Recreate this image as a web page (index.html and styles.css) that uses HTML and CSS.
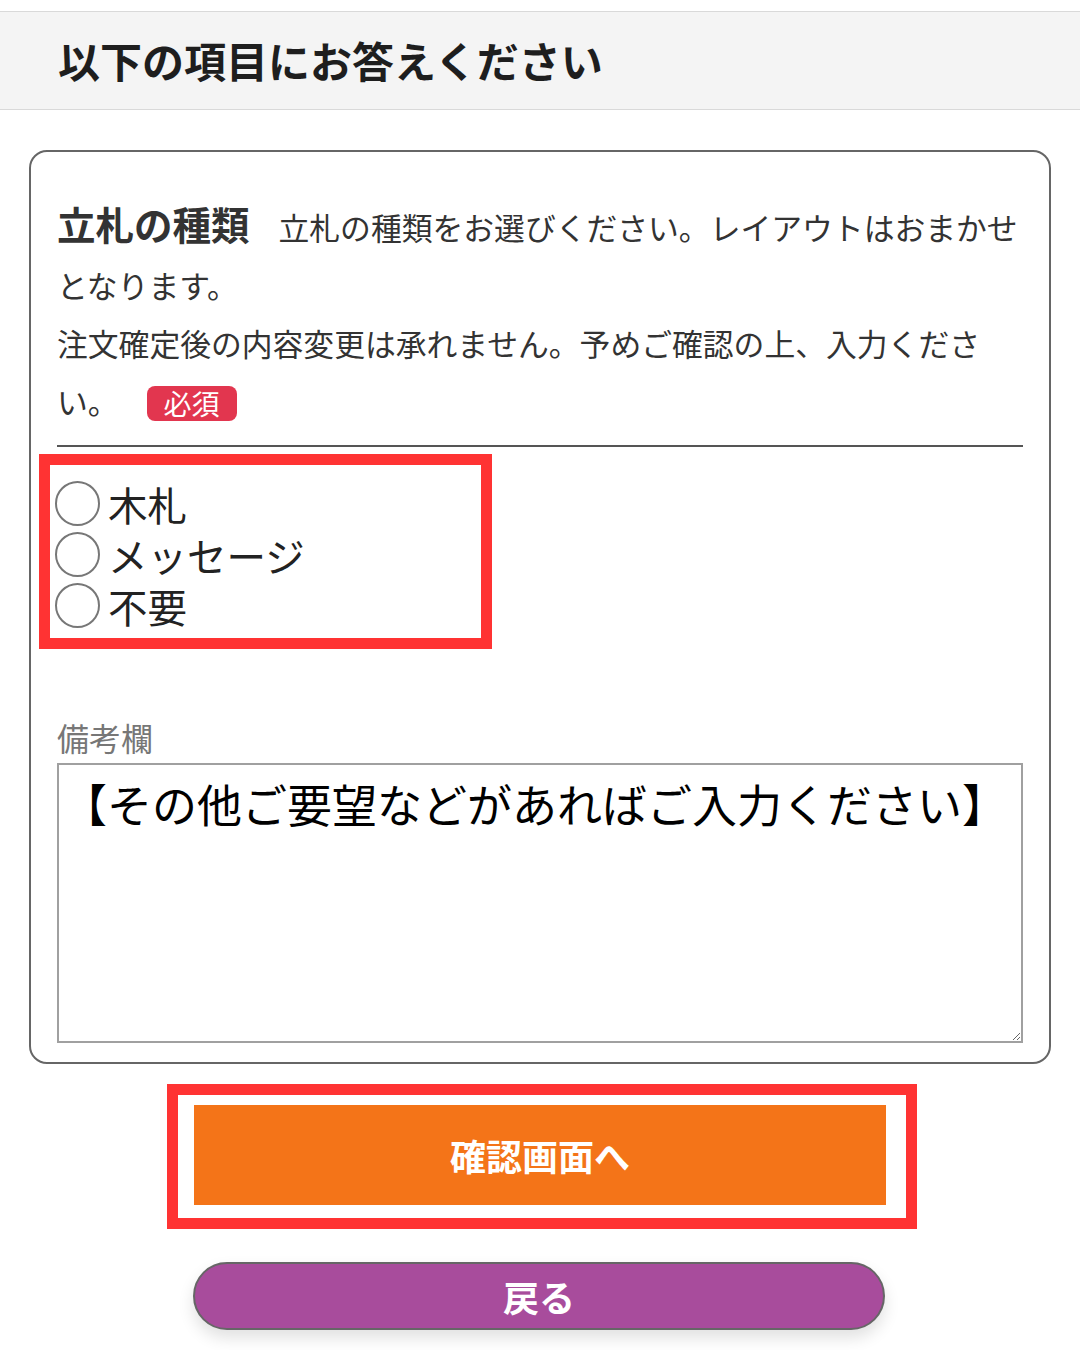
FILE: index.html
```html
<!DOCTYPE html>
<html lang="ja">
<head>
<meta charset="utf-8">
<title>以下の項目にお答えください</title>
<link rel="stylesheet" href="styles.css">
</head>
<body>
<header class="hd">
  <h1 class="hd-title">以下の項目にお答えください</h1>
</header>
<form class="form" onsubmit="return false">
  <section class="card">
    <p class="q"><span class="q-title">立札の種類</span><span class="q-desc">立札の種類をお選びください。レイアウトはおまかせとなります。<br>注文確定後の内容変更は承れません。予めご確認の上、入力ください。</span><span class="badge">必須</span></p>
    <hr class="rule">
    <div class="hl-box choices">
      <label class="choice"><input type="radio" name="kind" class="radio"><span class="choice-text">木札</span></label>
      <label class="choice"><input type="radio" name="kind" class="radio"><span class="choice-text">メッセージ</span></label>
      <label class="choice"><input type="radio" name="kind" class="radio"><span class="choice-text">不要</span></label>
    </div>
    <label class="note-label" for="note">備考欄</label>
    <textarea class="note" id="note">【その他ご要望などがあればご入力ください】</textarea>
  </section>
  <div class="hl-box next-wrap">
    <button type="button" class="btn-next">確認画面へ</button>
  </div>
  <button type="button" class="btn-back">戻る</button>
</form>
</body>
</html>
```
FILE: styles.css
```css
html, body {
  margin: 0;
  padding: 0;
  background: #fff;
}
body {
  font-family: "Noto Sans CJK JP", "Noto Sans", sans-serif;
  color: #333;
}
.hd {
  margin-top: 11px;
  border-top: 1px solid #d9d9d9;
  border-bottom: 1px solid #d9d9d9;
  background: #f4f4f4;
  height: 97px;
  display: flex;
  align-items: center;
  padding-left: 58px;
}
.hd-title {
  margin: 0;
  font-size: 42px;
  font-weight: 700;
  color: #1e1e1e;
  line-height: 1;
  position: relative;
  top: -1px;
}
.form {
  margin: 0;
  padding-bottom: 20px;
}
.card {
  margin: 40px 29px 0;
  border: 2px solid #666;
  border-radius: 18px;
  padding: 42px 26px 19px;
}
.q {
  margin: 0;
  font-size: 30.8px;
  line-height: 58px;
  color: #333;
}
.q-title {
  font-size: 38.5px;
  font-weight: 700;
  margin-right: 29px;
}
.badge {
  display: inline-block;
  margin-left: 28px;
  padding: 0 17px;
  height: 35px;
  line-height: 35px;
  font-size: 28px;
  color: #fff;
  background: #e2364f;
  border-radius: 8px;
  vertical-align: middle;
  position: relative;
  top: -2px;
}
.rule {
  border: 0;
  border-top: 2px solid #555;
  margin: 15px 0 0;
}
.hl-box {
  box-sizing: border-box;
  border: 11px solid #ff3333;
}
.choices {
  margin: 7px 0 0 -18px;
  width: 453px;
  padding: 13px 5px 7px;
}
.choice {
  display: flex;
  align-items: center;
  height: 51px;
  cursor: pointer;
}
.radio {
  appearance: none;
  -webkit-appearance: none;
  box-sizing: border-box;
  width: 45px;
  height: 45px;
  margin: 0;
  border: 2.5px solid #777;
  border-radius: 50%;
  background: #fff;
  flex: none;
}
.radio:checked {
  background: radial-gradient(circle, #333 0 9px, #fff 10px);
}
.choice-text {
  margin-left: 8px;
  font-size: 39.5px;
  line-height: 51px;
  color: #222;
}
.note-label {
  display: block;
  margin-top: 68px;
  font-size: 32px;
  line-height: 40px;
  color: #777;
}
.note {
  display: block;
  box-sizing: border-box;
  width: 100%;
  height: 280px;
  margin: 6px 0 0;
  border: 2px solid #a0a0a0;
  border-radius: 0;
  padding: 12px 3px;
  font-family: "Noto Sans CJK JP", "Noto Sans", sans-serif;
  font-size: 45px;
  line-height: 54px;
  color: #000;
  resize: vertical;
}
.next-wrap {
  margin: 20px 0 0 167px;
  width: 750px;
  padding: 10px 20px 13px 16px;
}
.btn-next {
  display: block;
  width: 100%;
  height: 100px;
  border: 0;
  margin: 0;
  background: #f47418;
  color: #fff;
  font-family: "Noto Sans CJK JP", "Noto Sans", sans-serif;
  font-size: 36px;
  font-weight: 700;
  cursor: pointer;
}
.btn-back {
  display: block;
  box-sizing: border-box;
  margin: 33px 0 0 193px;
  width: 692px;
  height: 68px;
  border: 2px solid #666;
  border-radius: 34px;
  background: #a84c9c;
  color: #fff;
  font-family: "Noto Sans CJK JP", "Noto Sans", sans-serif;
  font-size: 36px;
  font-weight: 700;
  box-shadow: 0 8px 16px rgba(0, 0, 0, 0.12);
  cursor: pointer;
}
```
